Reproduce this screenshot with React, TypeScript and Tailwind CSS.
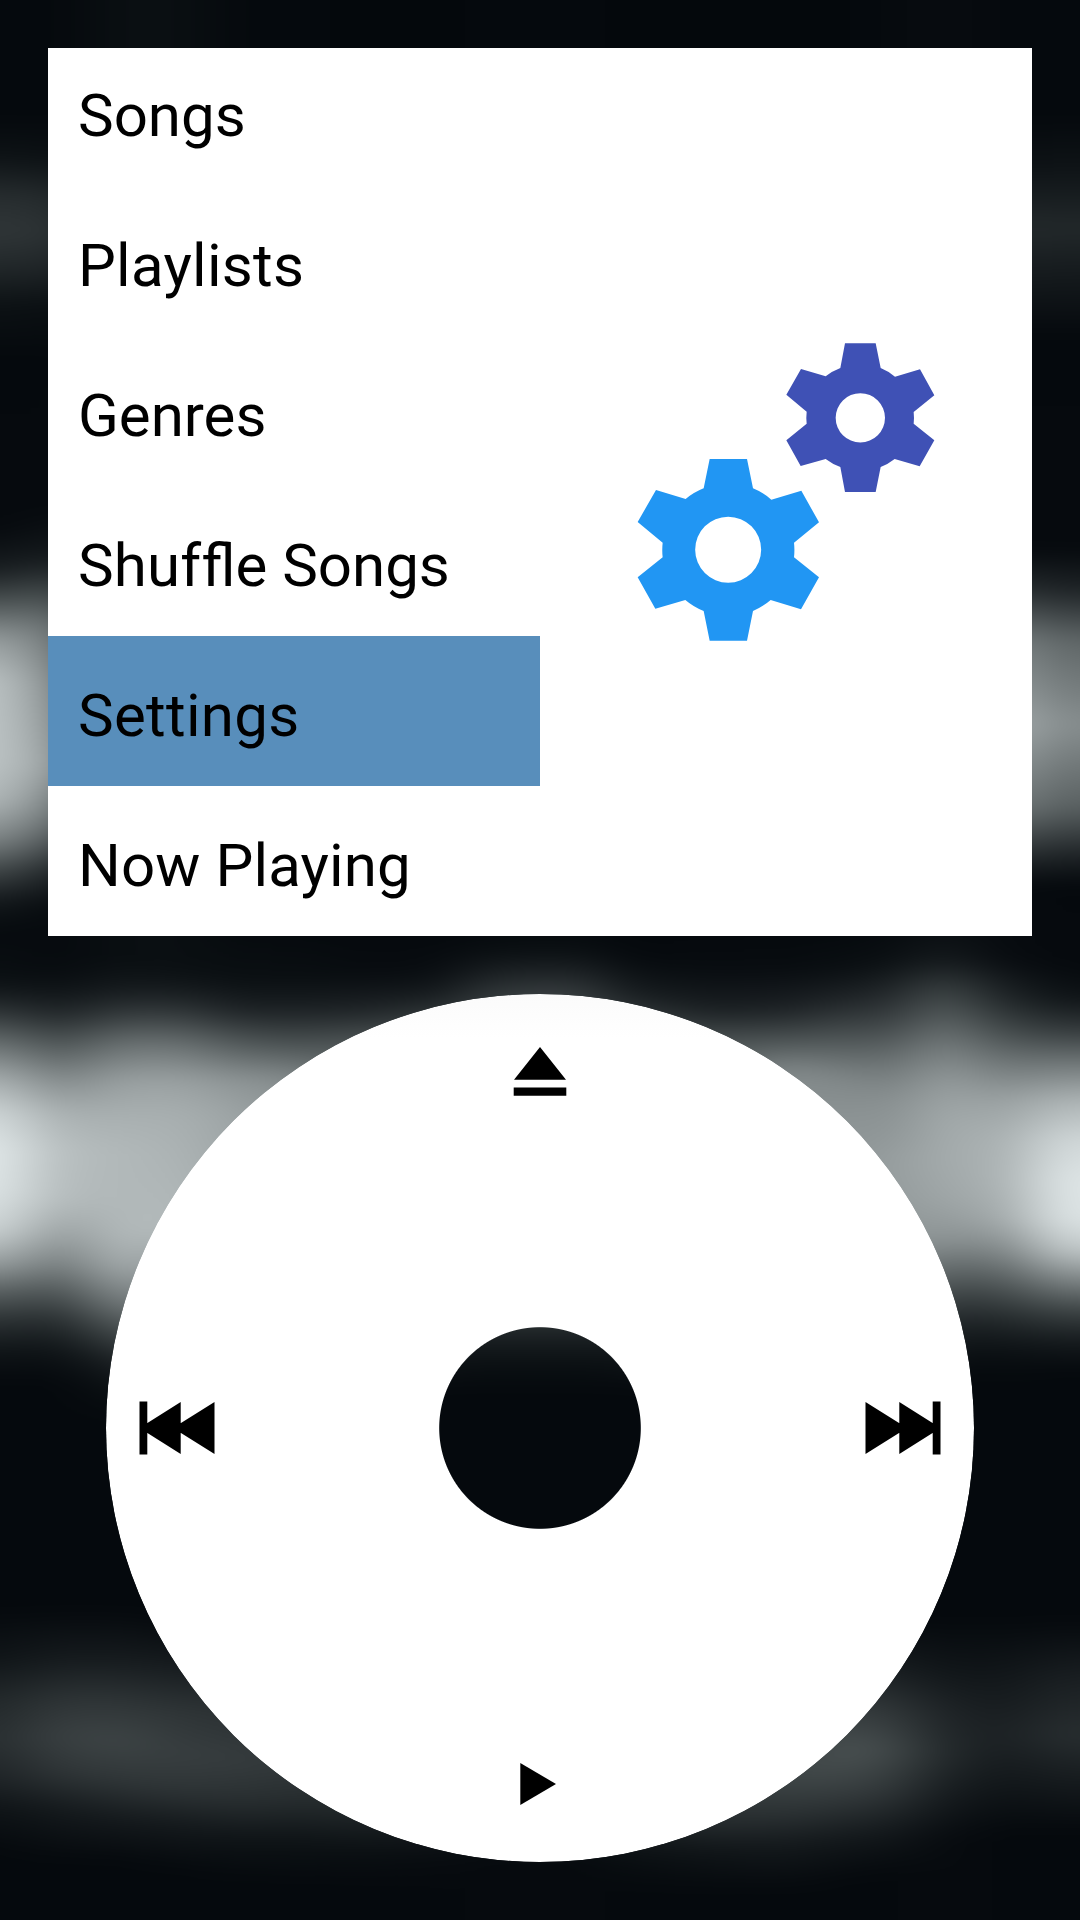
import React from 'react';
import { clsx } from 'clsx';

type MenuItem = { id: string; label: React.ReactNode; tracking?: string };

const menuItems: MenuItem[] = [
  { id: 'songs', label: 'Songs' },
  { id: 'playlists', label: 'Playlists', tracking: 'tracking-[0.27px]' },
  { id: 'genres', label: 'Genres' },
  {
    id: 'shuffle',
    // split so that only the second f joins the l
    label: (
      <>
        <span className="tracking-[0.2px]">Shuf</span>
        <span>fle Songs</span>
      </>
    ),
  },
  { id: 'settings', label: 'Settings', tracking: 'tracking-[0.3px]' },
  { id: 'playing', label: 'Now Playing', tracking: 'tracking-[0.12px]' },
];

type Column = { x: number; stops: [number, number][] };

// brightness samples [y, level] of the blurred album art, one list per column
const columns: Column[] = [
  {
    x: 0,
    stops: [
      [118, 9], [158, 18], [198, 44], [232, 52], [266, 38], [306, 16], [356, 9], [530, 10], [570, 28], [600, 75],
      [640, 155], [680, 192], [720, 194], [760, 194], [800, 182], [840, 130], [870, 70], [900, 25], [930, 10], [975, 14],
      [990, 22], [1013, 52], [1043, 108], [1080, 172], [1113, 210], [1150, 228], [1190, 225], [1230, 208], [1263, 156],
      [1290, 96], [1320, 48], [1350, 20], [1380, 9], [1610, 9], [1660, 20], [1700, 38], [1740, 46], [1780, 34], [1810, 18], [1850, 9],
    ],
  },
  {
    x: 60,
    stops: [
      [118, 9], [158, 16], [198, 40], [232, 48], [266, 36], [306, 14], [356, 9], [510, 10], [557, 26], [590, 70],
      [623, 110], [690, 135], [767, 155], [823, 105], [873, 32], [907, 10], [970, 11], [990, 18], [1013, 35], [1043, 78], [1080, 132],
      [1113, 172], [1150, 188], [1200, 184], [1230, 158], [1263, 122], [1290, 82], [1320, 42], [1350, 18], [1380, 9],
      [1610, 9], [1660, 26], [1700, 50], [1735, 62], [1770, 52], [1810, 24], [1860, 9],
    ],
  },
  {
    x: 120,
    stops: [
      [920, 14], [960, 13], [990, 26], [1013, 55], [1043, 108], [1080, 156], [1113, 172], [1150, 181], [1200, 181], [1235, 182],
      [1265, 170], [1300, 125], [1330, 75], [1360, 32], [1390, 14], [1420, 9], [1610, 9], [1660, 26], [1700, 50], [1740, 66],
      [1780, 52], [1820, 24], [1860, 9],
    ],
  },
  {
    x: 180,
    stops: [
      [920, 14], [970, 14], [990, 26], [1013, 55], [1043, 108], [1080, 158], [1113, 172], [1150, 176], [1230, 184], [1400, 20],
      [1440, 9], [1620, 9], [1670, 28], [1710, 50], [1755, 60], [1790, 50], [1825, 24], [1870, 9],
    ],
  },
  { x: 240, stops: [[920, 9], [980, 14], [1010, 32], [1043, 84], [1080, 144], [1113, 160], [1200, 165], [1400, 9], [1640, 9], [1700, 44], [1760, 58], [1800, 45], [1840, 18], [1880, 9]] },
  { x: 300, stops: [[920, 9], [980, 14], [1010, 32], [1043, 76], [1080, 138], [1200, 160], [1400, 9], [1640, 9], [1700, 40], [1765, 54], [1800, 42], [1840, 18], [1880, 9]] },
  { x: 360, stops: [[920, 8], [975, 12], [1010, 34], [1043, 84], [1200, 150], [1400, 9], [1640, 9], [1770, 52], [1810, 38], [1850, 15], [1885, 9]] },
  { x: 430, stops: [[920, 8], [970, 12], [994, 25], [1030, 70], [1200, 160], [1300, 70], [1345, 23], [1390, 9], [1640, 9], [1780, 48], [1820, 28], [1860, 12], [1890, 9]] },
  { x: 500, stops: [[920, 9], [950, 13], [975, 34], [994, 56], [1200, 160], [1300, 80], [1327, 38], [1345, 25], [1365, 14], [1390, 9], [1640, 9], [1780, 44], [1830, 18], [1860, 10]] },
  { x: 570, stops: [[920, 9], [950, 14], [975, 37], [994, 60], [1200, 160], [1300, 80], [1327, 38], [1345, 25], [1365, 14], [1390, 9], [1640, 9], [1780, 44], [1830, 18], [1860, 10]] },
  { x: 640, stops: [[920, 8], [960, 10], [994, 26], [1030, 70], [1200, 160], [1300, 70], [1345, 23], [1390, 9], [1640, 9], [1780, 50], [1825, 30], [1860, 14], [1890, 9]] },
  { x: 710, stops: [[920, 8], [970, 12], [1010, 30], [1043, 80], [1200, 150], [1400, 9], [1640, 9], [1780, 60], [1820, 44], [1850, 20], [1890, 9]] },
  { x: 780, stops: [[920, 8], [970, 12], [1010, 32], [1043, 84], [1070, 135], [1200, 150], [1400, 9], [1640, 9], [1770, 70], [1810, 50], [1845, 24], [1890, 9]] },
  { x: 850, stops: [[920, 8], [970, 14], [1000, 36], [1043, 88], [1080, 134], [1120, 146], [1200, 150], [1400, 9], [1640, 12], [1700, 52], [1750, 80], [1790, 60], [1840, 22], [1880, 9]] },
  {
    x: 890,
    stops: [
      [920, 10], [960, 14], [990, 36], [1020, 60], [1060, 106], [1100, 138], [1130, 144], [1160, 155], [1240, 150], [1400, 9],
      [1620, 9], [1670, 28], [1710, 52], [1750, 70], [1790, 52], [1830, 24], [1870, 9],
    ],
  },
  {
    x: 945,
    stops: [
      [920, 12], [960, 26], [990, 66], [1013, 90], [1043, 122], [1080, 154], [1120, 168], [1160, 168], [1200, 162], [1240, 142],
      [1270, 98], [1300, 56], [1330, 26], [1370, 9], [1620, 9], [1670, 20], [1710, 34], [1755, 40], [1790, 28], [1840, 11],
    ],
  },
  {
    x: 1000,
    stops: [
      [118, 9], [168, 18], [228, 40], [276, 26], [336, 9], [550, 10], [590, 46], [640, 128], [725, 174], [808, 120],
      [857, 44], [885, 10], [960, 12], [1000, 38], [1030, 70], [1060, 110], [1100, 156], [1140, 174], [1180, 176], [1220, 166],
      [1250, 130], [1290, 74], [1320, 38], [1350, 16], [1380, 9], [1620, 9], [1680, 22], [1735, 32], [1780, 22], [1830, 9],
    ],
  },
  {
    x: 1065,
    stops: [
      [118, 9], [168, 18], [228, 38], [276, 24], [336, 9], [550, 10], [590, 34], [640, 98], [725, 138], [808, 92],
      [857, 32], [885, 9], [970, 10], [1000, 20], [1030, 56], [1060, 110], [1100, 176], [1140, 212], [1180, 226], [1220, 224],
      [1250, 196], [1280, 130], [1310, 66], [1340, 26], [1370, 9], [1620, 9], [1680, 30], [1735, 44], [1780, 26], [1830, 9],
    ],
  },
];

const tint = (level: number) =>
  `rgb(${level - 4}, ${level + Math.min(3, Math.round(level / 25))}, ${level + 4})`;

function Backdrop() {
  return (
    <svg className="absolute inset-0 h-full w-full" viewBox="0 0 1080 1920" aria-hidden="true">
      <defs>
        <filter
          id="soften"
          filterUnits="userSpaceOnUse"
          x="-120"
          y="-60"
          width="1320"
          height="2040"
          colorInterpolationFilters="sRGB"
        >
          <feGaussianBlur stdDeviation="29 9" />
        </filter>
        {columns.map((column, i) => (
          <linearGradient key={column.x} id={`col${i}`} gradientUnits="userSpaceOnUse" x1="0" y1="0" x2="0" y2="1920">
            {column.stops.map(([y, level]) => (
              <stop key={y} offset={y / 1920} stopColor={tint(level)} />
            ))}
          </linearGradient>
        ))}
      </defs>
      <g filter="url(#soften)">
        {columns.map((column, i) => {
          const left = i === 0 ? -120 : (columns[i - 1].x + column.x) / 2;
          const right = i === columns.length - 1 ? 1200 : (column.x + columns[i + 1].x) / 2;
          return <rect key={column.x} x={left} y={-60} width={right - left + 1} height={2040} fill={`url(#col${i})`} />;
        })}
      </g>
    </svg>
  );
}

function GearsIcon() {
  return (
    <svg className="h-[300px] w-[300px]" viewBox="48 36 900 900" fillRule="evenodd">
      <path
        fill="#3f51b5"
        d="M675 40H767L782 114A162 162 0 0 1 825 140L900 118L943 196L881 246A162 162 0 0 1 881 281L943 331L899 409L824 387A162 162 0 0 1 782 411L767 486H675L661 411A162 162 0 0 1 617 387L542 408L499 331L560 281A162 162 0 0 1 560 245L499 194L543 117L617 139A162 162 0 0 1 661 114ZM721 189.500A74 74 0 1 0 721 337.500A74 74 0 1 0 721 189.500Z"
      />
      <path
        fill="#2196f3"
        d="M269 387H381L399 475A198 198 0 0 1 454 509L544 482L597 577L522 638A198 198 0 0 1 522 682L597 742L543 838L452 810A198 198 0 0 1 399 843L381 932H269L251 843A198 198 0 0 1 196 810L106 836L53 742L128 682A198 198 0 0 1 128 638L53 576L108 480L197 507A198 198 0 0 1 251 475ZM324.500 560A99 99 0 1 0 324.500 758A99 99 0 1 0 324.500 560Z"
      />
    </svg>
  );
}

function SkipIcon({ className }: { className?: string }) {
  return (
    <svg className={clsx('h-[54px] w-[76px]', className)} viewBox="0 0 76 54">
      <path d="M.5 1 42 27 .5 53ZM34.300 1 75.500 27 34.300 53ZM67.700.5h7.800v53h-7.800Z" />
    </svg>
  );
}

export default function App() {
  const selected = 'settings';

  return (
    <div className="relative h-[1920px] w-[1080px] overflow-hidden bg-[#05090d] font-[Roboto,sans-serif] text-black">
      <Backdrop />

      <div className="relative flex flex-col items-center pt-12">
        <div className="flex h-[888px] w-[984px] overflow-hidden bg-white">
          <ul className="flex w-1/2 flex-col justify-end">
            {menuItems.map((item) => (
              <li
                key={item.id}
                className={clsx(
                  'h-[150px] shrink-0 pt-11 pl-[30px] text-[60px] leading-[71px] whitespace-nowrap',
                  item.tracking,
                  item.id === selected && 'bg-[#588ebb]',
                )}
              >
                {item.label}
              </li>
            ))}
          </ul>
          <div className="flex w-1/2 items-center justify-center">
            <GearsIcon />
          </div>
        </div>

        <div className="mt-[58px] flex h-[868px] w-[868px] flex-col items-center rounded-full bg-linear-to-b from-[#fbfbfb] to-white to-5% pt-[53px] [mask-image:radial-gradient(circle,transparent_100.300px,black_101.300px)]">
          <button aria-label="Menu">
            <svg className="block h-[49px] w-[54px]" viewBox="0 0 54 49">
              <path d="M27 0 53 32.700H1ZM.7 40.500h52.600v8.200H.7Z" />
            </svg>
          </button>
          <div className="mt-[305px] flex w-full justify-between px-[33px]">
            <button aria-label="Previous">
              <SkipIcon className="-scale-x-100" />
            </button>
            <button aria-label="Next">
              <SkipIcon />
            </button>
          </div>
          <button aria-label="Play" className="mt-[308px]">
            <svg className="block h-[42px] w-10" viewBox="0 0 40 42">
              <path d="M.3 0 36 21 .3 42Z" />
            </svg>
          </button>
        </div>
      </div>
    </div>
  );
}
